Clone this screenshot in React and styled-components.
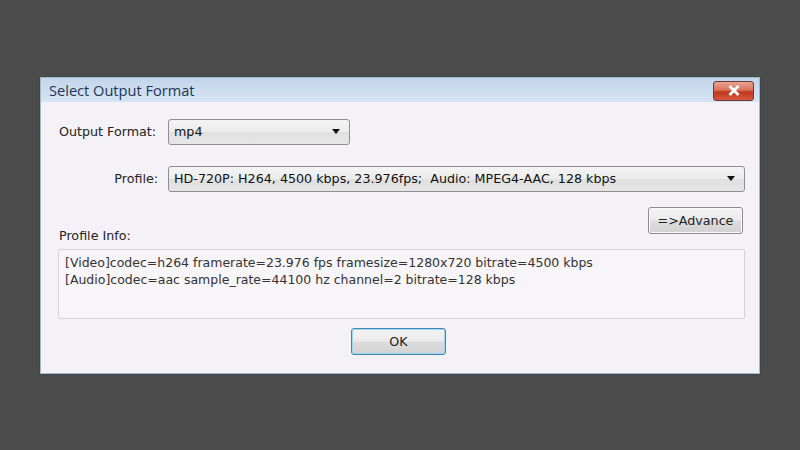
import React from 'react';
import styled, { createGlobalStyle } from 'styled-components';

const GlobalStyle = createGlobalStyle`
  html, body {
    margin: 0;
    padding: 0;
    background: #4b4b4b;
  }
  body {
    font-family: "DejaVu Sans", Tahoma, sans-serif;
  }
`;

const Screen = styled.div`
  width: 800px;
  height: 450px;
  display: flex;
  align-items: center;
  justify-content: center;
  background: #4b4b4b;
`;

const Window = styled.div`
  width: 720px;
  height: 297px;
  box-sizing: border-box;
  display: flex;
  flex-direction: column;
  background: #f5f2f7;
  border: 1px solid #9fb7c6;
  box-shadow: 0 0 0 1px #3d4a4c;
`;

const TitleBar = styled.div`
  height: 24px;
  flex: none;
  display: flex;
  align-items: center;
  justify-content: space-between;
  padding: 0 4px 0 8px;
  background: linear-gradient(180deg, #c3d5ea 0%, #cfdff1 60%, #d6e4f3 100%);
`;

const Title = styled.span`
  font-family: "Open Sans", "DejaVu Sans", sans-serif;
  font-size: 14.6px;
  color: #1d3557;
`;

const CloseButton = styled.div`
  width: 39px;
  height: 18px;
  margin: 2px 1px 0 0;
  display: flex;
  align-items: center;
  justify-content: center;
  border: 1px solid #6b3a36;
  border-radius: 3px;
  background: linear-gradient(180deg, #e9a493 0%, #d9735d 45%, #c2361f 55%, #d45a3f 100%);
`;

const Body = styled.div`
  flex: 1;
  display: flex;
  flex-direction: column;
  padding: 17px 14px 0 17px;
`;

const FieldGrid = styled.div`
  display: grid;
  grid-template-columns: 100px 1fr;
  column-gap: 10px;
  row-gap: 21px;
  align-items: center;
`;

const Label = styled.span`
  font-size: 12.7px;
  color: #222;
  justify-self: ${(p) => (p.$right ? 'end' : 'start')};
  padding-left: ${(p) => (p.$right ? '0' : '1px')};
  white-space: nowrap;
`;

const Combo = styled.div`
  width: ${(p) => p.$width || 'auto'};
  height: 26px;
  box-sizing: border-box;
  display: flex;
  align-items: center;
  justify-content: space-between;
  padding: 0 9px 0 5px;
  border: 1px solid #8f8f8f;
  border-radius: 3px;
  background: linear-gradient(180deg, #f4f4f4 0%, #ececec 48%, #e0e0e0 52%, #e6e6e6 100%);
  font-size: 12.7px;
  color: #111;
  white-space: nowrap;
`;

const Arrow = styled.span`
  width: 0;
  height: 0;
  border-left: 4px solid transparent;
  border-right: 4px solid transparent;
  border-top: 5px solid #111;
`;

const AdvanceRow = styled.div`
  display: flex;
  justify-content: flex-end;
  margin-top: 15px;
  padding-right: 2px;
`;

const InfoLabel = styled(Label)`
  margin-top: -6px;
  line-height: 15px;
`;

const Button = styled.div`
  width: ${(p) => p.$width};
  height: 27px;
  box-sizing: border-box;
  display: flex;
  align-items: center;
  justify-content: center;
  border: 1px solid ${(p) => (p.$focused ? '#3f86b5' : '#8c8c8c')};
  border-radius: 3px;
  box-shadow: ${(p) => (p.$focused ? 'inset 0 0 0 1px #9fd6ee' : 'inset 0 0 0 1px #fafafa')};
  background: linear-gradient(180deg, #f3f3f3 0%, #ebebeb 48%, #dcdcdc 52%, #d3d3d3 100%);
  font-size: 12.7px;
  color: #222;
`;

const InfoBox = styled.div`
  margin-top: 6px;
  height: 70px;
  box-sizing: border-box;
  padding: 4px 6px;
  border: 1px solid #d4d4d4;
  border-radius: 2px;
  background: #f7f5f8;
  font-size: 12.5px;
  line-height: 17px;
  color: #333;
  white-space: nowrap;
`;

const Footer = styled.div`
  display: flex;
  justify-content: center;
  margin-top: 9px;
  padding-right: 6px;
`;

const App = () => (
  <>
    <GlobalStyle />
    <Screen>
      <Window>
        <TitleBar>
          <Title>Select Output Format</Title>
          <CloseButton>
            <svg width="14" height="11" viewBox="0 0 14 11">
              <path d="M3.5 2 L10.5 9 M10.5 2 L3.5 9" stroke="#fff" strokeWidth="2.8" strokeLinecap="square" />
            </svg>
          </CloseButton>
        </TitleBar>
        <Body>
          <FieldGrid>
            <Label>Output Format:</Label>
            <Combo $width="182px">
              <span>mp4</span>
              <Arrow />
            </Combo>
            <Label $right>Profile:</Label>
            <Combo>
              <span>HD-720P: H264, 4500 kbps, 23.976fps;&nbsp; Audio: MPEG4-AAC, 128 kbps</span>
              <Arrow />
            </Combo>
          </FieldGrid>
          <AdvanceRow>
            <Button $width="95px">=&gt;Advance</Button>
          </AdvanceRow>
          <InfoLabel>Profile Info:</InfoLabel>
          <InfoBox>
            <div>[Video]codec=h264 framerate=23.976 fps framesize=1280x720 bitrate=4500 kbps</div>
            <div>[Audio]codec=aac sample_rate=44100 hz channel=2 bitrate=128 kbps</div>
          </InfoBox>
          <Footer>
            <Button $width="95px" $focused>OK</Button>
          </Footer>
        </Body>
      </Window>
    </Screen>
  </>
);

export default App;
